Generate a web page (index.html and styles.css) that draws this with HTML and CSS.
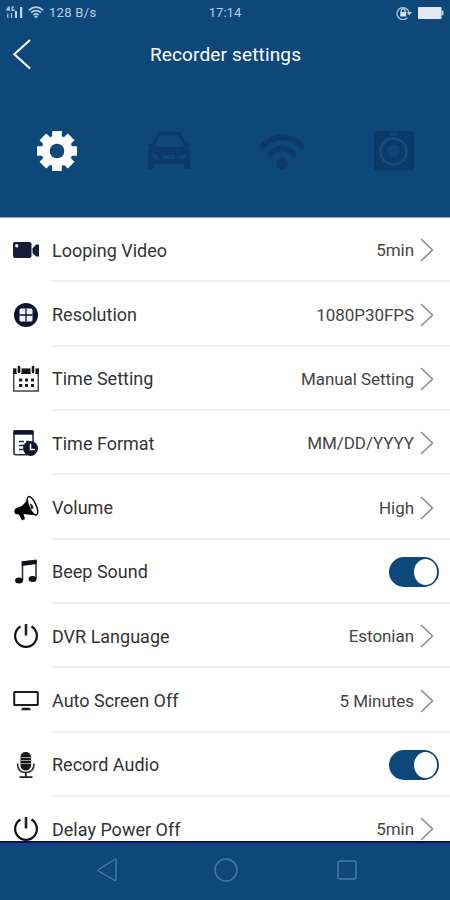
FILE: index.html
```
<!DOCTYPE html>
<html lang="en">
<head>
    <meta charset="UTF-8">
    <meta name="viewport" content="width=device-width, initial-scale=1.0">
    <title>Recorder settings</title>
    <link rel="stylesheet" href="styles.css">
</head>
<body>

    <!-- Header -->
    <header>
        <div class="status-bar">
            <div class="status-left">
                <svg class="signal" width="18" height="13" viewBox="0 0 18 13">
                    <path d="M3 0.5L0.8 3.8h3M3.3 1v4M8 1.2H6v3.2h2V3M1.8 7.5v4.5M5.5 7v5" fill="none" stroke="#b5c7dc" stroke-width="1.2"/>
                    <path d="M9 5h2v7H9zM14 1h2.2v11H14z" fill="#c6d4e5"/>
                </svg>
                <svg class="status-wifi" width="16" height="13" viewBox="0 0 16 13">
                    <path d="M0.8 4.3Q8-1.9 15.2 4.3M3 6.7Q8 2.4 13 6.7M5.2 9Q8 6.7 10.8 9" fill="none" stroke="#bccde0" stroke-width="1.6"/>
                    <path d="M6 10.2Q8 8.8 10 10.2L8 12.4z" fill="#bccde0"/>
                </svg>
                <span class="speed">128 B/s</span>
            </div>
            <span class="clock">17:14</span>
            <div class="status-right">
                <svg width="16" height="14" viewBox="0 0 16 14">
                    <path d="M11.5 11.6A6 6 0 1 1 13 7" fill="none" stroke="#b5c7dc" stroke-width="1.3"/>
                    <path d="M10.8 6h5l-2.6 3.4z" fill="#c6d4e5"/>
                    <rect x="4.2" y="6" width="6" height="4.5" fill="#d5dfeb"/>
                    <path d="M5.3 6V4.8a1.9 1.9 0 0 1 3.8 0V6" fill="none" stroke="#d5dfeb" stroke-width="1.2"/>
                </svg>
                <svg width="26" height="12" viewBox="0 0 26 12">
                    <rect width="23.5" height="12" rx="1" fill="#e4e9f1"/>
                    <rect x="23.5" y="3.5" width="2" height="5" rx="1" fill="#c2cfdf"/>
                </svg>
            </div>
        </div>

        <div class="title-bar">
            <svg class="back" width="20" height="32" viewBox="0 0 20 32">
                <path d="M18 2L2.3 16.2L18 30.5" fill="none" stroke="#fff" stroke-width="2.1"/>
            </svg>
            <h1>Recorder settings</h1>
        </div>

        <nav>
            <a>
                <svg width="40" height="40" viewBox="-20 -20 40 40">
                    <g fill="#fff">
                        <rect x="-4.8" y="-20" width="9.6" height="40" rx="0.5"/>
                        <rect x="-4.8" y="-20" width="9.6" height="40" rx="0.5" transform="rotate(45)"/>
                        <rect x="-4.8" y="-20" width="9.6" height="40" rx="0.5" transform="rotate(90)"/>
                        <rect x="-4.8" y="-20" width="9.6" height="40" rx="0.5" transform="rotate(135)"/>
                        <circle r="15.5"/>
                    </g>
                    <circle r="7.3" fill="#0e477a"/>
                </svg>
            </a>
            <a>
                <svg width="44" height="40" viewBox="0 0 44 40">
                    <path fill="#0b3a69" fill-rule="evenodd" d="M11 2Q12 1 14 1H31Q33 1 34 3L39 13L43 12V15L41 17Q43 19 43 22V38H37V33H7V38H1V22Q1 18 3 17L1 15V12L5 13L10 3ZM14 4.500Q12.500 4.500 12 5.500L8 15Q9 16 11 16H33Q36 16 37 15L32 5.500Q31.500 4.500 30 4.500ZM5 24Q5 28 9 28H12L11 24L5 22ZM39 22L33 24L32 28H35Q39 28 39 24ZM16 24V28H28V24Z"/>
                </svg>
            </a>
            <a>
                <svg width="48" height="40" viewBox="0 0 48 40">
                    <path d="M2.500 16.500Q24-4 45.500 16.500" fill="none" stroke="#0b3a69" stroke-width="5.500"/>
                    <path d="M10.500 24.500Q24 10.500 37.500 24.500" fill="none" stroke="#0b3a69" stroke-width="5.500"/>
                    <circle cx="24" cy="32.500" r="6" fill="#0b3a69"/>
                </svg>
            </a>
            <a>
                <svg width="40" height="40" viewBox="0 0 40 40">
                    <rect x="0" y="0" width="40" height="39.500" rx="3" fill="#0b3a69"/>
                    <path d="M16 1.500h7v3h-7z" fill="#0f4476"/>
                    <circle cx="19.500" cy="20.500" r="13" fill="none" stroke="#174c7e" stroke-width="2.400"/>
                    <circle cx="19.500" cy="20" r="6.200" fill="#0f4678"/>
                    <circle cx="36" cy="5" r="1" fill="#0f4678"/>
                </svg>
            </a>
        </nav>
    </header>

    <!-- Settings list -->
    <main class="settings">
        <div class="row">
            <svg class="icon" width="28" height="28" viewBox="0 0 28 28">
                <rect x="1" y="6" width="18.500" height="16" rx="2" fill="#171d39"/>
                <path d="M20.500 12.500L24 8.500H27V20.500H24L20.500 17z" fill="#171d39"/>
                <circle cx="4.700" cy="9.700" r="1.700" fill="#f4f4f7"/>
            </svg>
            <div class="row-body">
                <span class="label">Looping Video</span>
                <span class="value">5min</span>
                <svg class="arrow" width="14" height="24" viewBox="0 0 14 24"><path d="M1 1L12.500 12L1 23"/></svg>
            </div>
        </div>
        <div class="row">
            <svg class="icon" width="28" height="28" viewBox="0 0 28 28">
                <circle cx="14" cy="14" r="12" fill="#0c1236"/>
                <rect x="7.500" y="7.500" width="13" height="13" rx="1.500" fill="#f2f3f6"/>
                <path d="M14 7.500v13M7.500 14h13" stroke="#0c1236" stroke-width="1.300"/>
            </svg>
            <div class="row-body">
                <span class="label">Resolution</span>
                <span class="value">1080P30FPS</span>
                <svg class="arrow" width="14" height="24" viewBox="0 0 14 24"><path d="M1 1L12.500 12L1 23"/></svg>
            </div>
        </div>
        <div class="row">
            <svg class="icon" width="28" height="28" viewBox="0 0 28 28">
                <path d="M1.700 4h24.600v22H1.700z" fill="none" stroke="#444" stroke-width="1.400"/>
                <path d="M1 4h26v5H1z" fill="#171717"/>
                <path d="M7 1v6M21 1v6" stroke="#fff" stroke-width="5" stroke-linecap="round"/>
                <path d="M7 2v5M21 2v5" stroke="#171717" stroke-width="2.600" stroke-linecap="round"/>
                <path d="M7 15h3.300M13 15h3M19 15h3M7 20.500h3.300M13 20.500h3M19 20.500h3" stroke="#222" stroke-width="3"/>
            </svg>
            <div class="row-body">
                <span class="label">Time Setting</span>
                <span class="value">Manual Setting</span>
                <svg class="arrow" width="14" height="24" viewBox="0 0 14 24"><path d="M1 1L12.500 12L1 23"/></svg>
            </div>
        </div>
        <div class="row">
            <svg class="icon" width="28" height="28" viewBox="0 0 28 28">
                <path d="M15 25.800H3.500Q2 25.800 2 24.300V3Q2 1.700 3.500 1.700H19.500Q21 1.700 21 3V13" fill="none" stroke="#262b45" stroke-width="1.600"/>
                <path d="M1.500 1.500h20v4.200h-20z" fill="#10152f"/>
                <path d="M7 12.500h5M14 12.500h3M7 16.500h5M7 20.500h4" stroke="#262b45" stroke-width="1.400"/>
                <circle cx="18.500" cy="19.500" r="7.500" fill="#10152f"/>
                <path d="M18.500 14.800V20.500H22.800" fill="none" stroke="#fff" stroke-width="1.500"/>
            </svg>
            <div class="row-body">
                <span class="label">Time Format</span>
                <span class="value">MM/DD/YYYY</span>
                <svg class="arrow" width="14" height="24" viewBox="0 0 14 24"><path d="M1 1L12.500 12L1 23"/></svg>
            </div>
        </div>
        <div class="row">
            <svg class="icon" width="28" height="28" viewBox="0 0 28 28">
                <path d="M16.500 2L18 14L25 21.500L11.500 20L13 25L10 26.500L7 20.500L3.500 20Q1 17.500 3.500 14.500L10 12Q14.500 8 16.500 2z" fill="#000"/>
                <ellipse cx="20.500" cy="11.800" rx="3.600" ry="10" transform="rotate(-24 20.500 11.800)" fill="#fff" stroke="#111" stroke-width="1.500"/>
                <path d="M18 9.500Q21.500 10.500 21.500 14.500L19 15z" fill="#222"/>
            </svg>
            <div class="row-body">
                <span class="label">Volume</span>
                <span class="value">High</span>
                <svg class="arrow" width="14" height="24" viewBox="0 0 14 24"><path d="M1 1L12.500 12L1 23"/></svg>
            </div>
        </div>
        <div class="row">
            <svg class="icon" width="28" height="28" viewBox="0 0 28 28">
                <path d="M10.500 22.500V4L24 2.500V20.500" fill="none" stroke="#34343d" stroke-width="1.600"/>
                <path d="M9.800 3.500L24.700 2V6L9.800 8z" fill="#101018"/>
                <ellipse cx="7" cy="22.500" rx="4" ry="3" fill="#101018"/>
                <ellipse cx="20.500" cy="21" rx="4" ry="3" fill="#101018"/>
            </svg>
            <div class="row-body">
                <span class="label">Beep Sound</span>
                <span class="toggle"></span>
            </div>
        </div>
        <div class="row">
            <svg class="icon" width="28" height="28" viewBox="0 0 28 28">
                <path d="M8.500 4.500A10.900 10.900 0 1 0 19.500 4.500" fill="none" stroke="#111" stroke-width="2.200"/>
                <path d="M14 2v11.500" stroke="#222" stroke-width="2.600"/>
            </svg>
            <div class="row-body">
                <span class="label">DVR Language</span>
                <span class="value">Estonian</span>
                <svg class="arrow" width="14" height="24" viewBox="0 0 14 24"><path d="M1 1L12.500 12L1 23"/></svg>
            </div>
        </div>
        <div class="row">
            <svg class="icon" width="28" height="28" viewBox="0 0 28 28">
                <rect x="2.200" y="5" width="23.600" height="13" rx="0.500" fill="none" stroke="#1c1c1c" stroke-width="2"/>
                <path d="M10.500 20.700h7l1.500 2.600H9z" fill="#1c1c1c"/>
            </svg>
            <div class="row-body">
                <span class="label">Auto Screen Off</span>
                <span class="value">5 Minutes</span>
                <svg class="arrow" width="14" height="24" viewBox="0 0 14 24"><path d="M1 1L12.500 12L1 23"/></svg>
            </div>
        </div>
        <div class="row">
            <svg class="icon" width="28" height="28" viewBox="0 0 28 28">
                <rect x="8.500" y="1" width="10.500" height="18.500" rx="5" fill="#1a1a1a"/>
                <path d="M8 6.500h11.500M8 9.500h11.500M8 12.500h11.500" stroke="#999" stroke-width="1.200"/>
                <path d="M5.500 12.500Q5.500 21.500 13.800 21.500Q22 21.500 22 12.500" fill="none" stroke="#333" stroke-width="1.700"/>
                <path d="M13.800 21.500V26M7.500 26.200h13" stroke="#222" stroke-width="1.800"/>
            </svg>
            <div class="row-body">
                <span class="label">Record Audio</span>
                <span class="toggle"></span>
            </div>
        </div>
        <div class="row">
            <svg class="icon" width="28" height="28" viewBox="0 0 28 28">
                <path d="M8.500 4.500A10.900 10.900 0 1 0 19.500 4.500" fill="none" stroke="#111" stroke-width="2.200"/>
                <path d="M14 2v11.500" stroke="#222" stroke-width="2.600"/>
            </svg>
            <div class="row-body">
                <span class="label">Delay Power Off</span>
                <span class="value">5min</span>
                <svg class="arrow" width="14" height="24" viewBox="0 0 14 24"><path d="M1 1L12.500 12L1 23"/></svg>
            </div>
        </div>
    </main>

    <!-- System buttons -->
    <footer>
        <svg width="24" height="24" viewBox="0 0 24 24"><path d="M20 1.500V22Q20 23 19 22.500L2.500 13Q1.500 12.200 2.500 11.500L18.500 1.500Q20 0.700 20 1.500z"/></svg>
        <svg width="24" height="24" viewBox="0 0 24 24"><circle cx="12" cy="12" r="11"/></svg>
        <svg width="24" height="24" viewBox="0 0 24 24"><rect x="3" y="3" width="18" height="18" rx="2"/></svg>
    </footer>

</body>
</html>
```

FILE: styles.css
```
/* General Styling */
body {
    font-family: Roboto, sans-serif;
    margin: 0;
    height: 900px;
    display: flex;
    flex-direction: column;
    overflow: hidden;
    background-color: #fff;
}

/* Header Styling */
header {
    flex: none;
    height: 218px;
    background: #0e477a;
    color: #fff;
    border-bottom: 1px solid #8ba4be;
    box-sizing: border-box;
}

.status-bar {
    display: grid;
    grid-template-columns: 1fr auto 1fr;
    align-items: center;
    height: 25px;
    padding: 0 6px;
    font-size: 13px;
    color: #bccde0;
}

.status-left {
    display: flex;
    align-items: center;
    gap: 5px;
}

.status-left svg {
    margin-right: -1px;
}

.speed {
    margin-left: 1px;
    letter-spacing: 0.3px;
}

.status-right {
    display: flex;
    align-items: center;
    justify-content: flex-end;
    gap: 6px;
}

.title-bar {
    display: grid;
    grid-template-columns: 36px 1fr 36px;
    align-items: center;
    height: 58px;
}

.back {
    margin-left: 12px;
}

h1 {
    margin: 0;
    padding-left: 1px;
    text-align: center;
    font-size: 19px;
    font-weight: 400;
    letter-spacing: 0.15px;
}

nav {
    display: flex;
    height: 136px;
    padding-left: 1px;
}

nav a {
    flex: 1;
    display: flex;
    align-items: center;
    justify-content: center;
}

/* Settings Rows */
.settings {
    flex: 1;
    min-height: 0;
    overflow: hidden;
}

.row {
    display: flex;
    align-items: center;
    height: 64.35px;
    padding-left: 11.5px;
}

.icon {
    flex: none;
    margin-right: 11.5px;
}

.row-body {
    flex: 1;
    display: flex;
    align-items: center;
    height: 100%;
    padding: 2px 11px 0 1px;
    border-bottom: 2px solid #efefef;
    box-sizing: border-box;
}

.label {
    flex: 1;
    font-size: 18px;
    color: #333;
}

.value {
    font-size: 17px;
    letter-spacing: -0.05px;
    color: #444;
}

.arrow {
    margin: 0 5px 0 6px;
    fill: none;
    stroke: #888;
    stroke-width: 1.5;
}

/* Toggle Styling */
.toggle {
    display: flex;
    justify-content: flex-end;
    width: 50px;
    height: 30px;
    padding: 2px;
    border-radius: 15px;
    background: #0e477a;
    box-sizing: border-box;
}

.toggle::after {
    content: "";
    width: 23px;
    height: 26px;
    border-radius: 50%;
    background: #fff;
}

/* Footer Styling */
footer {
    flex: none;
    display: flex;
    justify-content: space-between;
    align-items: center;
    height: 59px;
    padding: 0 91.5px 3px 95.5px;
    border-top: 2px solid #100b6c;
    background: #0e477a;
    box-sizing: border-box;
}

footer svg {
    fill: none;
    stroke: #4a79a8;
    stroke-width: 1.4;
}

footer svg:nth-child(2) {
    margin-left: -2px;
}
```
